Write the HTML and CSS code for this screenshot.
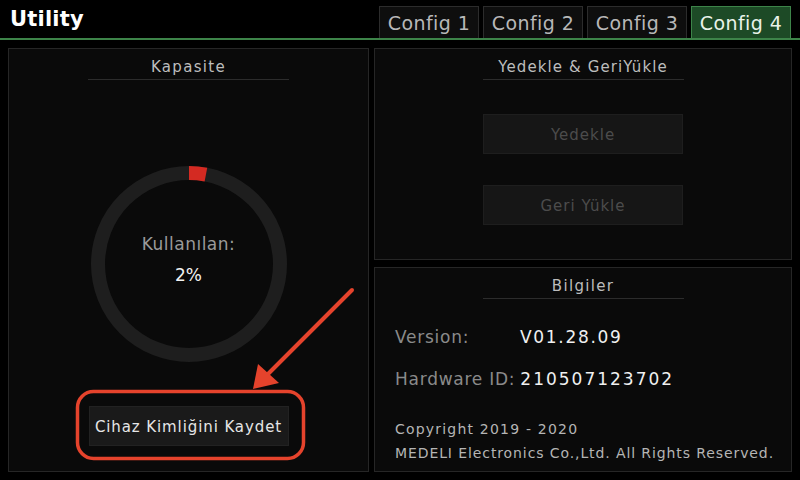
FILE: index.html
```html
<!DOCTYPE html>
<html>
<head>
<meta charset="utf-8">
<link rel="stylesheet" href="styles.css">
</head>
<body>
<div class="app">
  <header class="topbar">
    <div class="title">Utility</div>
    <nav class="tabs">
      <div class="tab">Config 1</div>
      <div class="tab">Config 2</div>
      <div class="tab">Config 3</div>
      <div class="tab active">Config 4</div>
    </nav>
  </header>
  <main class="main">
    <section class="panel left">
      <div class="ptitle">Kapasite</div>
      <div class="ring">
        <svg width="198" height="198" viewBox="0 0 198 198">
          <circle cx="99" cy="99" r="91" fill="none" stroke="#1e1e1e" stroke-width="14"/>
          <circle cx="99" cy="99" r="91" fill="none" stroke="#d42a22" stroke-width="14" stroke-dasharray="17 600" transform="rotate(-90 99 99)"/>
        </svg>
        <div class="ring-text">
          <div class="used">Kullanılan:</div>
          <div class="pct">2%</div>
        </div>
      </div>
      <button class="btn save">Cihaz Kimliğini Kaydet</button>
    </section>
    <div class="col">
      <section class="panel backup">
        <div class="ptitle wide">Yedekle &amp; GeriYükle</div>
        <button class="btn dim">Yedekle</button>
        <button class="btn dim">Geri Yükle</button>
      </section>
      <section class="panel info">
        <div class="ptitle">Bilgiler</div>
        <div class="row r1"><span class="lbl lv">Version:</span><span class="val">V01.28.09</span></div>
        <div class="row r2"><span class="lbl">Hardware ID:</span><span class="val">210507123702</span></div>
        <div class="copy">
          <div>Copyright 2019 - 2020</div>
          <div>MEDELI Electronics Co.,Ltd. All Rights Reserved.</div>
        </div>
      </section>
    </div>
  </main>
  <svg class="annot" width="800" height="480" viewBox="0 0 800 480">
    <rect x="77.5" y="391.5" width="226" height="67" rx="16" ry="16" fill="none" stroke="#e5432c" stroke-width="3.5"/>
    <line x1="352" y1="290" x2="268" y2="374" stroke="#e5432c" stroke-width="4" stroke-linecap="round"/>
    <polygon points="253,389 258,364 279,383" fill="#e5432c"/>
  </svg>
</div>
</body>
</html>
```
FILE: styles.css
```css
* { box-sizing: border-box; }
html, body { margin: 0; padding: 0; background: #000; }
body { font-family: "DejaVu Sans", "Liberation Sans", sans-serif; color: #ccc; }
.app { position: relative; width: 800px; height: 480px; overflow: hidden; }
.topbar {
  height: 40px;
  display: flex;
  align-items: flex-end;
  justify-content: space-between;
  border-bottom: 2px solid #3d8449;
  padding: 0 9px 0 10px;
}
.title {
  font-family: "DejaVu Sans", sans-serif;
  font-weight: bold;
  font-size: 21px;
  color: #fff;
  align-self: center;
  letter-spacing: 0.2px;
}
.tabs { display: flex; gap: 4px; }
.tab {
  width: 100px;
  height: 32px;
  border: 1px solid #2c2c2c;
  border-bottom: none;
  background: #0e0e0e;
  color: #b8b8b8;
  font-size: 19px;
  letter-spacing: 0.4px;
  display: flex;
  align-items: center;
  justify-content: center;
  padding-top: 1px;
}
.tab.active { background: #1d4a26; border-color: #3d8449; color: #eaf3ea; }
.main {
  display: flex;
  gap: 5px;
  padding: 8px;
  height: 440px;
}
.panel {
  background: #0a0a0a;
  border: 1px solid #262626;
  display: flex;
  flex-direction: column;
  align-items: center;
}
.left { width: 361px; height: 424px; }
.col { width: 418px; display: flex; flex-direction: column; gap: 7px; }
.backup { height: 212px; }
.info { height: 205px; align-items: stretch; }
.ptitle {
  width: 201px;
  text-align: center;
  font-size: 15px;
  color: #bdbdbd;
  border-bottom: 1px solid #2c2c2c;
  margin-top: 10px;
  padding-bottom: 3px;
  line-height: 17px;
  align-self: center;
  letter-spacing: 1.3px;
}
.ptitle.wide { letter-spacing: 1.1px; }
.ring { position: relative; width: 198px; height: 198px; margin-top: 85px; }
.ring svg { display: block; }
.ring-text { position: absolute; inset: 0; display: flex; flex-direction: column; align-items: center; justify-content: center; }
.used { font-size: 17px; color: #9a9a9a; margin-top: -10px; letter-spacing: 0.5px; }
.pct { font-size: 17px; color: #f2f2f2; margin-top: 11px; }
.btn {
  font-family: inherit;
  width: 200px;
  height: 40px;
  border: 1px solid #222;
  background: #1a1a1a;
  font-size: 15px;
  padding: 2px 0 0 0;
}
.save { margin-top: 43px; color: #e6e6e6; letter-spacing: 0.9px; }
.dim { color: #4c4c4c; background: #161616; border-color: #1e1e1e; letter-spacing: 1px; }
.backup .dim:first-of-type { margin-top: 34px; }
.backup .dim + .dim { margin-top: 31px; }
.row { display: flex; font-size: 17px; padding-left: 20px; }
.lbl { color: #8a8a8a; letter-spacing: 0.75px; }
.lv { width: 122px; }
.val { color: #f0f0f0; margin-left: 3px; letter-spacing: 1.7px; }
.r2 .val { letter-spacing: 2px; margin-left: 5px; }
.r1 { margin-top: 28px; }
.r2 { margin-top: 22px; }
.copy { padding-left: 20px; font-size: 14px; color: #b5b5b5; margin-top: 28px; line-height: 24px; letter-spacing: 0.9px; }
.copy div:first-child { letter-spacing: 1.2px; }
.annot { position: absolute; left: 0; top: 0; pointer-events: none; }
```
